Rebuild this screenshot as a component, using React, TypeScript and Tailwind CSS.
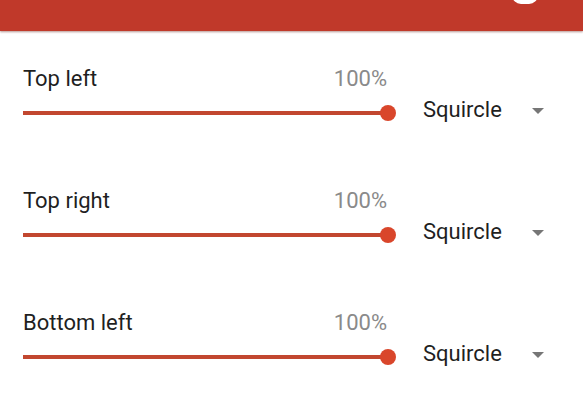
const ROWS = [
  { label: 'Top left', value: 100, shape: 'Squircle' },
  { label: 'Top right', value: 100, shape: 'Squircle' },
  { label: 'Bottom left', value: 100, shape: 'Squircle' },
]

function Slider({ value }: { value: number }) {
  return (
    <div className="relative h-4 w-full">
      <div className="absolute left-0 right-2 top-[6px] h-[4px] bg-[#c2472f]" />
      <div
        className="absolute top-0 h-4 w-4 -translate-x-2 rounded-full bg-[#d9462b]"
        style={{ left: `calc(${value}% - ${(value / 100) * 16}px + 8px)` }}
      />
    </div>
  )
}

function Row({ label, value, shape }: { label: string; value: number; shape: string }) {
  return (
    <div className="flex items-end">
      <div className="flex w-[373px] flex-col gap-[13px]">
        <div className="flex items-center justify-between text-[22px] leading-[26px]">
          <span className="text-[#1f1f1f]">{label}</span>
          <span className="pr-[9px] text-[#8a8a8a]">{value}%</span>
        </div>
        <Slider value={value} />
      </div>
      <div className="mb-[-2px] ml-[27px] flex items-center gap-[30px]">
        <span className="text-[22px] leading-[26px] text-[#1f1f1f]">{shape}</span>
        <svg width="12" height="6" viewBox="0 0 12 6" className="mt-[1px]">
          <path d="M0 0 L12 0 L6 6 Z" fill="#767676" />
        </svg>
      </div>
    </div>
  )
}

export default function App() {
  return (
    <div className="h-[400px] w-[583px] overflow-hidden bg-white font-['Roboto',sans-serif]">
      <div className="relative h-[31px] bg-[#c0392a] shadow-[0_1px_2px_rgba(90,20,10,0.45)]">
        <div className="absolute left-[512px] top-[-14px] h-[18px] w-[26px] rounded-full bg-white" />
      </div>
      <div className="flex flex-col gap-[67px] pl-[23px] pt-[35px]">
        {ROWS.map((r) => (
          <Row key={r.label} {...r} />
        ))}
      </div>
    </div>
  )
}
